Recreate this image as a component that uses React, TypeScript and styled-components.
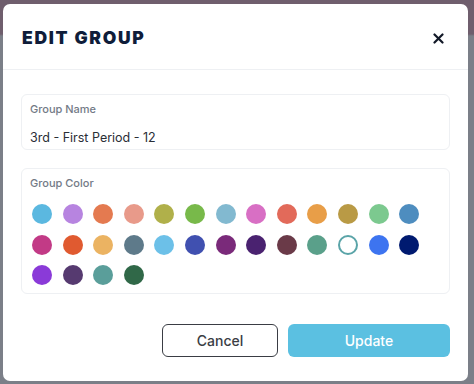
import styled, { createGlobalStyle } from 'styled-components';

const GlobalStyle = createGlobalStyle`
  html, body {
    margin: 0;
    padding: 0;
  }
  body {
    width: 474px;
    height: 384px;
    overflow: hidden;
    background: linear-gradient(#6f5e6d 0px, #6f5e6d 34px, #7b7f88 36px, #7b7f88 100%);
    font-family: Inter, "Noto Sans", sans-serif;
  }
`;

const COLORS = [
  '#5bb8e0', '#b784e0', '#e47a50', '#e89a8a', '#b0b04a', '#78b94a', '#82b9d0',
  '#d86fc4', '#e26a5a', '#e89e48', '#b99a45', '#7cc98f', '#4e8dbf',
  '#c23a86', '#e05a30', '#ebb362', '#5e7a8a', '#6cc0e8', '#4050b0', '#7a2a7a',
  '#4a2270', '#6a3a48', '#5aa08a', 'selected', '#3d74f0', '#001a70',
  '#8a3ad8', '#563a70', '#5a9e9a', '#306848'
];

function App() {
  return (
    <>
      <GlobalStyle />
      <Modal>
        <Header>
          <Title>EDIT GROUP</Title>
          <CloseButton aria-label="Close">
            <svg width="11" height="11" viewBox="0 0 11 11">
              <path d="M1.5 1.5 L9.5 9.5 M9.5 1.5 L1.5 9.5" stroke="#111827" strokeWidth="2.2" strokeLinecap="round" />
            </svg>
          </CloseButton>
        </Header>
        <Body>
          <Field>
            <Label>Group Name</Label>
            <Value>3rd - First Period - 12</Value>
          </Field>
          <ColorField>
            <Label>Group Color</Label>
            <Swatches>
              {COLORS.map((c, i) =>
                c === 'selected' ? (
                  <Swatch key={i} $color="#ffffff" $ring="#5aa4a8" />
                ) : (
                  <Swatch key={i} $color={c} />
                )
              )}
            </Swatches>
          </ColorField>
        </Body>
        <Footer>
          <CancelButton>Cancel</CancelButton>
          <UpdateButton>Update</UpdateButton>
        </Footer>
      </Modal>
    </>
  );
}

export default App;

const Modal = styled.div`
  margin: 4px 0 0 3px;
  width: 465px;
  height: 377px;
  background: #ffffff;
  border-radius: 7px;
  display: flex;
  flex-direction: column;
`;

const Header = styled.div`
  height: 66px;
  flex-shrink: 0;
  display: flex;
  align-items: center;
  justify-content: space-between;
  padding: 0 18px 0 19px;
  border-bottom: 1px solid #eef0f3;
  box-sizing: border-box;
`;

const Title = styled.h2`
  margin: 0;
  font-size: 17.5px;
  font-weight: 900;
  letter-spacing: 1.7px;
  color: #0f1d3a;
  padding-top: 2px;
`;

const CloseButton = styled.button`
  border: none;
  background: none;
  padding: 0;
  margin-right: 5px;
  margin-top: 3px;
  width: 14px;
  height: 14px;
  display: flex;
  align-items: center;
  justify-content: center;
`;

const Body = styled.div`
  padding: 24px 18px 0 18px;
  display: flex;
  flex-direction: column;
  gap: 18px;
`;

const Field = styled.div`
  height: 56px;
  box-sizing: border-box;
  border: 1px solid #eef0f3;
  border-radius: 6px;
  padding: 7px 8px 0 8px;
`;

const ColorField = styled(Field)`
  height: 126px;
`;

const Label = styled.div`
  font-size: 11px;
  font-weight: 500;
  color: #737a86;
  line-height: 14px;
`;

const Value = styled.div`
  margin-top: 13px;
  font-size: 12.5px;
  color: #2a2e36;
  line-height: 18px;
`;

const Swatches = styled.div`
  display: grid;
  grid-template-columns: repeat(13, 20px);
  column-gap: 10.6px;
  row-gap: 10.5px;
  margin-top: 14px;
  padding-left: 2px;
`;

const Swatch = styled.div<{ $color: string; $ring?: string }>`
  width: 20px;
  height: 20px;
  border-radius: 50%;
  box-sizing: border-box;
  background: ${(p) => p.$color};
  border: ${(p) => (p.$ring ? `2.5px solid ${p.$ring}` : 'none')};
`;

const Footer = styled.div`
  display: flex;
  justify-content: flex-end;
  gap: 10px;
  padding: 30px 18px 0 0;
`;

const CancelButton = styled.button`
  width: 116px;
  height: 33px;
  box-sizing: border-box;
  border: 1.5px solid #3a3d44;
  border-radius: 6px;
  background: #ffffff;
  font-family: Inter, "Noto Sans", sans-serif;
  font-size: 14px;
  font-weight: 500;
  color: #3a3d44;
`;

const UpdateButton = styled.button`
  width: 162px;
  height: 33px;
  border: none;
  border-radius: 6px;
  background: #5bc0e1;
  font-family: Inter, "Noto Sans", sans-serif;
  font-size: 14px;
  font-weight: 500;
  color: #ffffff;
`;
